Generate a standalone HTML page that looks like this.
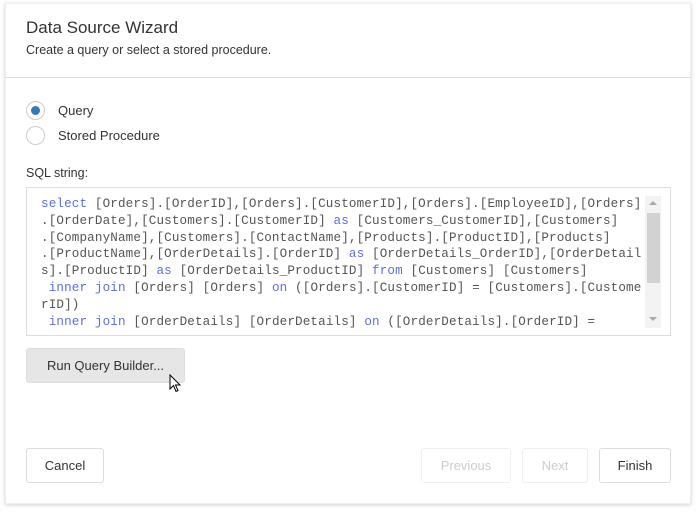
<!DOCTYPE html>
<html><head><style>
body{margin:0;width:697px;height:512px;background:#fff;position:relative;overflow:hidden;font-family:"Liberation Sans",sans-serif;color:#333}
.panel{position:absolute;left:5px;top:3px;width:686px;height:501px;background:#fff;box-shadow:0 1px 4px rgba(0,0,0,.18);border:1px solid #eee;box-sizing:border-box}
.a{position:absolute}
.t1{left:26px;top:18px;font-size:17px;color:#333}
.t2{left:26px;top:43px;font-size:12.5px;color:#333}
.hr{left:5px;top:77px;width:686px;height:1px;background:#ddd}
.radio{width:19px;height:19px;border:1px solid #ccc;border-radius:50%;box-sizing:border-box}
.lbl{font-size:13px;color:#333}
.box{left:26px;top:187px;width:645px;height:149px;border:1px solid #ddd;box-sizing:border-box;overflow:hidden}
pre{margin:0;position:absolute;left:14px;top:8px;font-family:"Liberation Mono",monospace;font-size:12.6px;letter-spacing:0.14px;line-height:16.8px;color:#555}
.k{color:#5b6ee0}
.btn{position:absolute;height:35px;border:1px solid #ddd;border-radius:3px;box-sizing:border-box;font-size:13px;text-align:center;line-height:33px;color:#333;background:#fff}
</style></head><body>
<div class="panel"></div>
<div class="a t1">Data Source Wizard</div>
<div class="a t2">Create a query or select a stored procedure.</div>
<div class="a hr"></div>
<div class="a radio" style="left:26px;top:101px"><div style="position:absolute;left:4px;top:4px;width:9px;height:9px;border-radius:50%;background:#337ab7"></div></div>
<div class="a lbl" style="left:58px;top:103px">Query</div>
<div class="a radio" style="left:26px;top:126px"></div>
<div class="a lbl" style="left:58px;top:128px">Stored Procedure</div>
<div class="a lbl" style="left:26px;top:166px;font-size:12.5px">SQL string:</div>
<div class="a box">
<pre><span class="k">select</span> [Orders].[OrderID],[Orders].[CustomerID],[Orders].[EmployeeID],[Orders]
.[OrderDate],[Customers].[CustomerID] <span class="k">as</span> [Customers_CustomerID],[Customers]
.[CompanyName],[Customers].[ContactName],[Products].[ProductID],[Products]
.[ProductName],[OrderDetails].[OrderID] <span class="k">as</span> [OrderDetails_OrderID],[OrderDetail
s].[ProductID] <span class="k">as</span> [OrderDetails_ProductID] <span class="k">from</span> [Customers] [Customers]
 <span class="k">inner join</span> [Orders] [Orders] <span class="k">on</span> ([Orders].[CustomerID] = [Customers].[Custome
rID])
 <span class="k">inner join</span> [OrderDetails] [OrderDetails] <span class="k">on</span> ([OrderDetails].[OrderID] =</pre>
<div class="a" style="left:618px;top:8px;width:16px;height:132px;background:#f3f3f3"></div>
<div class="a" style="left:620px;top:25px;width:13px;height:70px;background:#d2d2d2"></div>
<div class="a" style="left:622px;top:13px;width:0;height:0;border-left:4px solid transparent;border-right:4px solid transparent;border-bottom:4px solid #aaa"></div>
<div class="a" style="left:622px;top:129px;width:0;height:0;border-left:4px solid transparent;border-right:4px solid transparent;border-top:4px solid #aaa"></div>
</div>
<div class="btn" style="left:26px;top:348px;width:159px;background:#e6e6e6">Run Query Builder...</div>
<svg class="a" style="left:169px;top:374px" width="14" height="20" viewBox="0 0 14 20"><path d="M1 1 L1 15 L4.5 11.5 L7 17.5 L9 16.5 L6.5 11 L11 11 Z" fill="#fff" stroke="#000" stroke-width="1"/></svg>
<div class="btn" style="left:26px;top:448px;width:78px">Cancel</div>
<div class="btn" style="left:421px;top:448px;width:90px;color:#ccc;border-color:#eee">Previous</div>
<div class="btn" style="left:522px;top:448px;width:66px;color:#ccc;border-color:#eee">Next</div>
<div class="btn" style="left:599px;top:448px;width:72px">Finish</div>
</body></html>
